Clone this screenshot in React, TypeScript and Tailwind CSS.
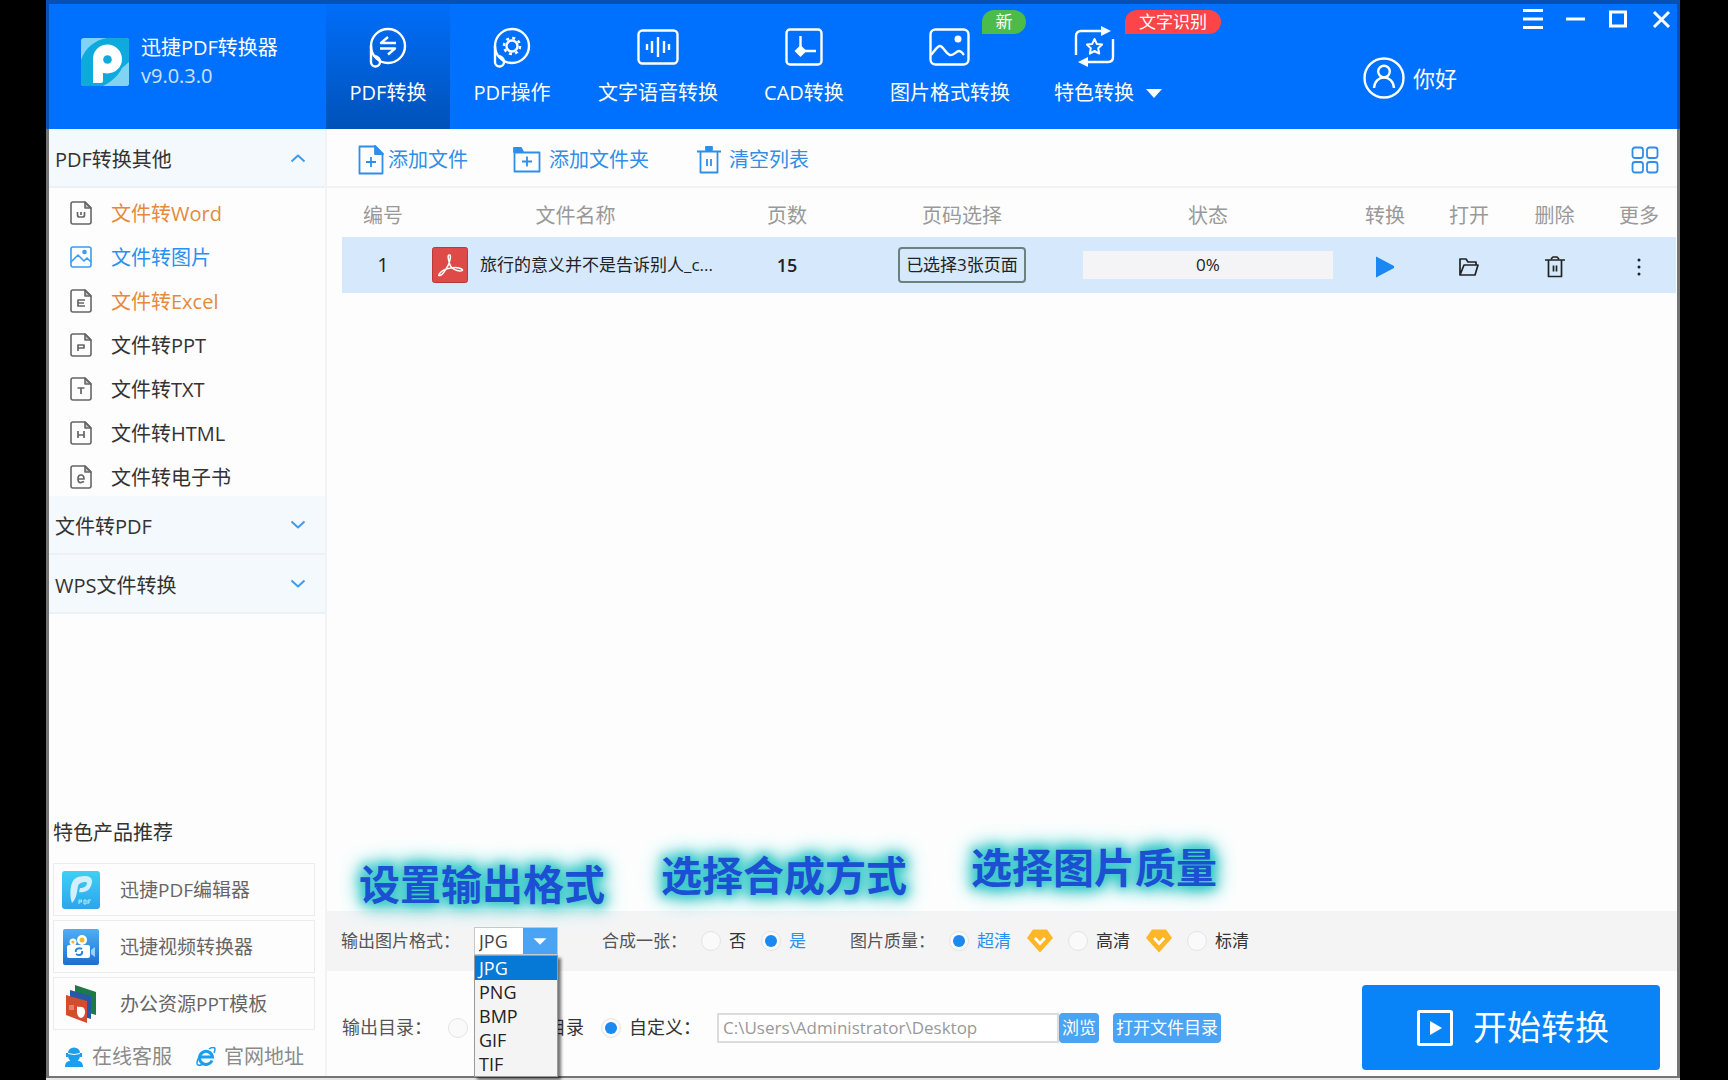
import React from "react";

type IconProps = { className?: string };

/* ---------- header icons ---------- */

const Loop = () => (
  <>
    <circle cx="22" cy="22" r="17" />
    <path d="M5 22V38a4.500 4.500 0 0 0 9 0c0-3-2-5-5-6" />
  </>
);

const line = {
  fill: "none",
  stroke: "currentColor",
  strokeWidth: 2.4,
  strokeLinejoin: "round" as const,
};

const ConvertIcon = () => (
  <svg viewBox="0 0 44 44" className="size-11" {...line}>
    <Loop />
    <path d="M30 19H15l7-6M14 24.500h15l-7 6" />
  </svg>
);

const GearIcon = () => (
  <svg viewBox="0 0 44 44" className="size-11" {...line}>
    <Loop />
    <circle cx="22" cy="22" r="5.500" />
    <circle cx="22" cy="22" r="8" strokeWidth="2.500" strokeDasharray="3 3.280" />
  </svg>
);

const VoiceIcon = () => (
  <svg viewBox="0 0 44 44" className="size-11" {...line}>
    <rect x="2.500" y="6.500" width="39" height="33" rx="4" />
    <path d="M11 20v6M16 17v12M22 13v20M28 17v12M33 20v6" />
  </svg>
);

const CadIcon = () => (
  <svg viewBox="0 0 44 44" className="size-11" {...line}>
    <rect x="4.500" y="5.500" width="35" height="35" rx="3.500" />
    <path d="M18.500 12v15H34" />
    <path d="m18.500 21 6 6-6 6-6-6z" fill="currentColor" stroke="none" />
  </svg>
);

const PictureIcon = () => (
  <svg viewBox="0 0 44 44" className="size-11" {...line}>
    <rect x="2.500" y="5.500" width="38" height="35" rx="5" />
    <path d="M3 31c3-3 6-9 9-9s6 8 10 9 6-4 9-4 3 2 5 4" />
    <circle cx="30" cy="15" r="3.500" fill="currentColor" stroke="none" />
  </svg>
);

const SpecialIcon = () => (
  <svg viewBox="0 0 44 44" className="size-11" {...line}>
    <path d="M4 31V12q0-5 5-5h22M41 15v18q0 5-5 5H14" />
    <path d="m29 2 10 5-10 5zM16 33 6 38l10 5z" fill="currentColor" stroke="none" />
    <path d="m22.500 15 2.300 4.900 5.300.7-3.900 3.700 1 5.300-4.700-2.600-4.700 2.600 1-5.300-3.900-3.700 5.300-.7z" strokeWidth="2" />
  </svg>
);

const Logo = () => (
  <svg viewBox="0 0 48 48" className="size-12 shrink-0">
    <clipPath id="logo-clip">
      <rect width="48" height="48" rx="3" />
    </clipPath>
    <g clipPath="url(#logo-clip)">
      <rect width="48" height="48" fill="#7fd3f3" />
      <path d="M0 48V22C4 10 14 2 26 0h22v30C44 40 38 46 30 48z" fill="#0ea9dd" />
      <path d="M41 30 48 24v24H22c8-4 15-10 19-18z" fill="#7fd3f3" />
      <path d="M12 45V22A14.500 14.500 0 1 1 26.500 35.500L22 35v8q0 2-2 2z" fill="#fff" />
      <circle cx="26.500" cy="21.500" r="4.300" fill="#0ea9dd" />
    </g>
  </svg>
);

/* ---------- toolbar and row icons ---------- */

const AddFileIcon = () => (
  <svg viewBox="0 0 26 30" className="h-[30px] w-[26px]" {...line} strokeWidth="1.800">
    <path d="M1.500 1.500h16l7 8v19h-23z" />
    <path d="M17 1v8h8z" fill="currentColor" />
    <path d="M8 17h10M13 12v10" />
  </svg>
);

const AddFolderIcon = () => (
  <svg viewBox="0 0 28 26" className="h-[26px] w-7" {...line} strokeWidth="1.800">
    <path d="M1.500 5.500h25v19h-25z" />
    <path d="M1 1h7l2 4H1z" fill="currentColor" />
    <path d="M9 14.500h10M14 9.500v10" />
  </svg>
);

const ClearIcon = () => (
  <svg viewBox="0 0 24 28" className="h-7 w-6" {...line} strokeWidth="1.800">
    <path d="M0 5.500h24M3.500 6v20.500h17V6M10 13v7M14 13v7" />
    <path d="M9 1h6v3H9z" fill="currentColor" />
  </svg>
);

const GridIcon = () => (
  <svg viewBox="0 0 28 28" className="size-7" {...line} strokeWidth="1.800">
    <rect x="1.500" y="1.500" width="10.500" height="10.500" rx="2.500" />
    <rect x="16" y="1.500" width="10.500" height="10.500" rx="2.500" />
    <rect x="1.500" y="16" width="10.500" height="10.500" rx="2.500" />
    <rect x="16" y="16" width="10.500" height="10.500" rx="2.500" />
  </svg>
);

const PdfIcon = () => (
  <svg viewBox="0 0 36 36" className="size-9 shrink-0">
    <rect x=".5" y=".5" width="35" height="35" rx="2" fill="#dd4a48" stroke="#b93a3a" />
    <path
      d="M17 8c-2 0 0 7 1 10s6 6 10 6 3-2-1-3-14 0-18 4-2 4 0 3 8-9 9-15 0-5-1-5z"
      fill="none"
      stroke="#fff"
      strokeWidth="1.500"
    />
  </svg>
);

const OpenIcon = () => (
  <svg viewBox="0 0 22 20" className="h-5 w-[22px]" {...line} strokeWidth="1.700">
    <path d="M2 18V2h6l2 3h8v3M2 18 6 8h14l-3 10z" />
  </svg>
);

const TrashIcon = () => (
  <svg viewBox="0 0 20 22" className="h-[22px] w-5" {...line} strokeWidth="1.700">
    <path d="M0 4h20M3.500 4v16.500h13V4M6 3l2-2h4l2 2M8.500 9.500v6M11.500 9.500v6" />
  </svg>
);

const Chevron = ({ up }: { up?: boolean }) => (
  <svg viewBox="0 0 16 10" className="mb-1 h-2.5 w-4" {...line} stroke="#3d9cf2" strokeWidth="2">
    <path d={up ? "m1.500 8.500 6.500-6 6.500 6" : "m1.500 1.500 6.500 6 6.500-6"} />
  </svg>
);

const Gem = () => (
  <svg viewBox="0 0 26 24" className="h-6 w-[26px]">
    <path d="M6 .5h14l6 8.500-13 14.500L0 9z" fill="#fdb627" />
    <path d="m8 9 5 5.500L18 9" fill="none" stroke="#fff" strokeWidth="2.800" />
  </svg>
);

const FileIcon = ({ glyph, className }: { glyph: string } & IconProps) => (
  <svg viewBox="0 0 22 24" className={className} {...line} strokeWidth="1.600">
    <path d="M3 1h12l6 6v14q0 2-2 2H3q-2 0-2-2V3q0-2 2-2z" />
    <path d="M15 1v6h6z" fill="currentColor" fillOpacity=".4" />
    <path d={glyph} strokeWidth="1.700" />
  </svg>
);

const SmallPicture = () => (
  <svg viewBox="0 0 22 22" className="mb-0.5 h-[22px] w-[22px] text-[#3b9bf3]" {...line} strokeWidth="1.600">
    <rect x="1" y="1" width="20" height="20" rx="2" />
    <path d="m1 16 7-7 6 6 3-3 4 4" />
    <circle cx="14.500" cy="6" r="1.500" fill="currentColor" />
  </svg>
);

/* ---------- product icons ---------- */

const EditorIcon = () => (
  <svg viewBox="0 0 38 38" className="size-[38px]">
    <defs>
      <linearGradient id="editor" x1="0" y1="0" x2="0" y2="1">
        <stop offset="0" stopColor="#3ed0f5" />
        <stop offset="1" stopColor="#2ba5ee" />
      </linearGradient>
    </defs>
    <rect width="38" height="38" rx="3" fill="url(#editor)" />
    <path d="M10 32C7 24 8 10 14 7c6-3 17-3 16 4-1 8-6 11-13 10l1-4c4 0 7-2 7-5 0-2-8-1-9 3-1 5-1 12-6 17z" fill="#d4effc" />
    <path d="M17 33v-4h2.500v2H17m5-2v4h2v-4zm4 4v-4h3m-3 2h2" fill="none" stroke="#bfe7fb" />
  </svg>
);

const VideoIcon = () => (
  <svg viewBox="0 0 36 36" className="mx-px size-9">
    <defs>
      <linearGradient id="video" x1="0" y1="0" x2="0" y2="1">
        <stop offset="0" stopColor="#4db0f2" />
        <stop offset="1" stopColor="#1d6fd0" />
      </linearGradient>
    </defs>
    <rect width="36" height="36" rx="2" fill="url(#video)" />
    <circle cx="19" cy="11" r="5" fill="#fff" />
    <circle cx="19" cy="11" r="2.500" fill="#f5b62e" />
    <circle cx="10" cy="13" r="3.500" fill="#fff" />
    <circle cx="10" cy="13" r="1.500" fill="#f5b62e" />
    <rect x="4" y="16" width="23" height="13" rx="2" fill="#fff" />
    <path d="m28 21 4-3v10l-4-3z" fill="#8fd8fa" />
    <path d="M19 20c-3-2-7 0-6 3m0 2c3 2 7 1 6-3" fill="none" stroke="#2b86dc" strokeWidth="2" />
  </svg>
);

const TemplateIcon = () => (
  <svg viewBox="0 0 38 38" className="size-[38px]">
    <path d="m13 0 21 7v23l-21-6z" fill="#1c7a46" />
    <path d="m8 5 21 6v23L8 28z" fill="#2558a8" />
    <path d="m4 10 21 6v22L4 30z" fill="#d64a2e" />
    <path d="M15 21c1 2 2 0 4 1 3 0 4 2 4 5s-2 6-4 6-4-3-4-6z" fill="#fff" />
    <path d="M7 20h5v5H7z" fill="#e8806c" />
  </svg>
);

const ServiceIcon = () => (
  <svg viewBox="0 0 20 20" className="size-5" fill="#1b9df0">
    <path d="M4 6a6 5.500 0 0 1 12 0v3a6 6 0 0 1-12 0z" />
    <path d="M1 20c0-4 2-6 5-6h8c3 0 5 2 5 6z" />
    <path d="M2 6h2v4H2zm14 0h2v4h-2z" />
    <path d="M4 6.500q6 2 12 0" stroke="#fff" fill="none" />
  </svg>
);

const BrowserIcon = () => (
  <svg viewBox="0 0 20 20" className="size-5" fill="none" stroke="#1b9df0">
    <path d="M16 13.500A6.500 6.500 0 1 1 16.500 10H5" strokeWidth="3" />
    <path d="M13 2c3-2 6-2 6 0s0 2-1 4M4 9c-3 4-4 8-2 9s3 0 5-1" strokeWidth="1.500" />
  </svg>
);

/* ---------- data ---------- */

const tabs = [
  { label: "PDF转换", icon: <ConvertIcon />, width: "w-31", active: true },
  { label: "PDF操作", icon: <GearIcon />, width: "w-31" },
  { label: "文字语音转换", icon: <VoiceIcon />, width: "w-42" },
  { label: "CAD转换", icon: <CadIcon />, width: "w-31" },
  { label: "图片格式转换", icon: <PictureIcon />, width: "w-42", badge: "新", badgeClass: "right-2 w-11 bg-[#4dbb4a]" },
  { label: "特色转换", icon: <SpecialIcon />, width: "w-30", caret: true, badge: "文字识别", badgeClass: "left-[91px] w-24 bg-[#fb4548]" },
];

const fileItems = [
  { label: "文件转Word", color: "text-[#e58a3c]", glyph: "M7.500 11v3q0 2 2 2h3q2 0 2-2v-3M11 11v3" },
  { label: "文件转图片", color: "text-[#2b8ff0]" },
  { label: "文件转Excel", color: "text-[#e58a3c]", glyph: "M15 11H8v6h7M8 14h6" },
  { label: "文件转PPT", color: "text-[#333]", glyph: "M8 18v-6h6v3H8" },
  { label: "文件转TXT", color: "text-[#333]", glyph: "M7.500 11h7M11 11v6" },
  { label: "文件转HTML", color: "text-[#333]", glyph: "M8 10v7M14 10v7M8 14h6" },
  { label: "文件转电子书", color: "text-[#333]", glyph: "M8 14h6q0-4-3-4t-3 4 3 3.500l3-1" },
];

const products = [
  { label: "迅捷PDF编辑器", icon: <EditorIcon /> },
  { label: "迅捷视频转换器", icon: <VideoIcon /> },
  { label: "办公资源PPT模板", icon: <TemplateIcon /> },
];

const formats = ["JPG", "PNG", "BMP", "GIF", "TIF"];

/* ---------- parts ---------- */

function Section({ label, up }: { label: string; up?: boolean }) {
  return (
    <button
      aria-expanded={!!up}
      className="flex h-[59px] w-full items-center justify-between border-b-2 border-[#edf1f4] bg-[#f4f9fd] pt-1 pr-[19px] pl-1.5 text-[20px] text-[#333]"
    >
      {label}
      <Chevron up={up} />
    </button>
  );
}

type RadioProps = { name: string; label: React.ReactNode; checked?: boolean; className?: string };

function Radio({ name, label, checked, className = "" }: RadioProps) {
  return (
    <label className={`flex shrink-0 items-center gap-2 whitespace-nowrap text-[#333] ${className}`}>
      <input
        type="radio"
        name={name}
        defaultChecked={checked}
        className="flex size-5 shrink-0 appearance-none items-center justify-center rounded-full border border-[#e4e4e4] bg-[#fafafa] checked:before:size-3 checked:before:rounded-full checked:before:bg-[#1b8af0] checked:before:content-['']"
      />
      {label}
    </label>
  );
}

function Caption({ text, className }: { text: string; className: string }) {
  return (
    <p
      className={`text-[41px] leading-10 font-bold whitespace-nowrap text-[#1c4fd2] [text-shadow:0_0_8px_#3ccaca,0_0_12px_#3ccaca,0_0_16px_#3ccaca,0_0_20px_#3ccaca,0_0_24px_#3ccaca] ${className}`}
    >
      {text}
    </p>
  );
}

function Header() {
  return (
    <header className="flex h-[129px] shrink-0 border-x-3 border-t-4 border-[#0750b4] bg-[#0070ff] text-white">
      <div className="flex w-[277px] shrink-0 gap-3 pt-[34px] pl-8">
        <Logo />
        <div className="-mt-1 text-[20px] leading-7">
          <h1>迅捷PDF转换器</h1>
          <p className="text-white/80">v9.0.3.0</p>
        </div>
      </div>
      <nav className="flex">
        {tabs.map((t) => (
          <button
            key={t.label}
            className={`relative flex h-full shrink-0 flex-col items-center gap-[13px] pt-5 ${t.width} ${
              t.active ? "bg-linear-to-b from-[#006efa] to-[#0052b8]" : ""
            }`}
          >
            {t.icon}
            <span className="relative text-[20px] leading-6 whitespace-nowrap">
              {t.label}
              {t.caret && (
                <svg viewBox="0 0 16 10" className="absolute top-2 left-full ml-3 h-2.5 w-4" fill="currentColor">
                  <path d="M0 0h16L8 9z" />
                </svg>
              )}
            </span>
            {t.badge && (
              <span className={`absolute top-1.5 h-6 rounded-t-xl rounded-br-xl text-center text-[17px] leading-6 ${t.badgeClass}`}>
                {t.badge}
              </span>
            )}
          </button>
        ))}
      </nav>
      <a href="#user" className="mr-auto ml-[209px] flex items-center gap-2 self-start pt-[53px] text-[22px] leading-10 whitespace-nowrap">
        <svg viewBox="0 0 42 42" className="size-[42px]" {...line}>
          <circle cx="21" cy="21" r="19.500" />
          <circle cx="21" cy="14.500" r="5.800" />
          <path d="M11 31c1-14 19-14 20 0" />
        </svg>
        你好
      </a>
      <div className="flex gap-[21px] pt-1 pr-1">
        <button aria-label="菜单" className="size-[22px]">
          <svg viewBox="0 0 22 22" {...line} strokeWidth="3">
            <path d="M1 2.500h20M1 11h20M1 19.500h20" />
          </svg>
        </button>
        <button aria-label="最小化" className="size-[22px]">
          <svg viewBox="0 0 22 22" {...line} strokeWidth="3">
            <path d="M1 11h19" />
          </svg>
        </button>
        <button aria-label="最大化" className="size-[22px]">
          <svg viewBox="0 0 22 22" {...line} strokeWidth="3" strokeLinejoin="miter">
            <path d="M2.500 4h15v14h-15z" />
          </svg>
        </button>
        <button aria-label="关闭" className="size-[22px]">
          <svg viewBox="0 0 22 22" {...line} strokeWidth="3">
            <path d="m3 4 15 15M18 4 3 19" />
          </svg>
        </button>
      </div>
    </header>
  );
}

function Sidebar() {
  return (
    <aside className="flex w-[278px] shrink-0 flex-col border-r-2 border-[#f1f3f5]">
      <Section label="PDF转换其他" up />
      <ul className="-mb-1 pt-1">
        {fileItems.map((f) => (
          <li key={f.label}>
            <a href="#convert" className={`flex h-11 items-center gap-[19px] pl-[21px] text-[20px] ${f.color}`}>
              {f.glyph ? <FileIcon glyph={f.glyph} className="mb-0.5 h-6 w-[22px] text-[#666]" /> : <SmallPicture />}
              {f.label}
            </a>
          </li>
        ))}
      </ul>
      <Section label="文件转PDF" />
      <Section label="WPS文件转换" />
      <div className="mt-auto">
        <h2 className="pl-1 text-[20px] leading-7 text-[#333]">特色产品推荐</h2>
        <ul className="mt-4 flex flex-col gap-1">
          {products.map((p) => (
            <li key={p.label}>
              <a
                href="#product"
                className="mr-2.5 ml-1 flex h-[53px] items-center gap-5 border border-[#ececec] pl-2 text-[19px] text-[#666]"
              >
                {p.icon}
                <span className="pt-0.5">{p.label}</span>
              </a>
            </li>
          ))}
        </ul>
        <div className="flex h-[46px] items-center gap-6 pt-2 pl-[15px] text-[20px] text-[#8a8a8a]">
          <a href="#service" className="flex items-center gap-2">
            <ServiceIcon />
            在线客服
          </a>
          <a href="#site" className="flex items-center gap-2">
            <BrowserIcon />
            官网地址
          </a>
        </div>
      </div>
    </aside>
  );
}

function Toolbar() {
  return (
    <div className="flex h-[59px] items-center border-b-2 border-[#f2f2f4] pt-1 pr-[18px] pl-[31px] text-[20px] text-[#2f8fe8]">
      <button className="flex items-center gap-1">
        <AddFileIcon />
        添加文件
      </button>
      <button className="ml-[45px] flex items-center gap-2">
        <AddFolderIcon />
        添加文件夹
      </button>
      <button className="ml-12 flex items-center gap-2">
        <ClearIcon />
        清空列表
      </button>
      <button aria-label="切换视图" className="ml-auto">
        <GridIcon />
      </button>
    </div>
  );
}

function FileTable() {
  return (
    <div className="pr-px pl-[15px]">
      <table className="w-full table-fixed text-center">
        <colgroup>
          <col className="w-[82px]" />
          <col />
          <col className="w-[120px]" />
          <col className="w-[230px]" />
          <col className="w-[262px]" />
          <col className="w-[92px]" />
          <col className="w-[76px]" />
          <col className="w-[95px]" />
          <col className="w-[74px]" />
        </colgroup>
        <thead>
          <tr className="h-[49px] text-[20px] text-[#999]">
            {["编号", "文件名称", "页数", "页码选择", "状态", "转换", "打开", "删除", "更多"].map((h) => (
              <th key={h} className="pt-1.5 font-normal">
                {h}
              </th>
            ))}
          </tr>
        </thead>
        <tbody>
          <tr className="h-14 bg-[#d6e9fc] text-[17px] text-[#222]">
            <td className="text-[20px]">1</td>
            <td>
              <div className="flex items-center gap-3 pl-2 whitespace-nowrap">
                <PdfIcon />
                旅行的意义并不是告诉别人_c...
              </div>
            </td>
            <td className="text-[18px] font-semibold">15</td>
            <td>
              <button className="h-9 w-32 rounded-sm border-2 border-[#6d8080] whitespace-nowrap">已选择3张页面</button>
            </td>
            <td className="px-1.5">
              <div role="progressbar" aria-valuenow={0} className="h-7 bg-[#f4f4f6] leading-7">
                0%
              </div>
            </td>
            <td>
              <button aria-label="转换" className="align-middle">
                <svg viewBox="0 0 18 22" className="h-[22px] w-[18px]" fill="#1b87f3">
                  <path d="M0 1q0-1 1 0l17 9v2L1 21q-1 1-1 0z" />
                </svg>
              </button>
            </td>
            <td>
              <button aria-label="打开" className="align-middle">
                <OpenIcon />
              </button>
            </td>
            <td>
              <button aria-label="删除" className="align-middle">
                <TrashIcon />
              </button>
            </td>
            <td>
              <button aria-label="更多" className="align-middle">
                <svg viewBox="0 0 4 18" className="h-[18px] w-1" fill="currentColor">
                  <circle cx="2" cy="2" r="1.500" />
                  <circle cx="2" cy="9" r="1.500" />
                  <circle cx="2" cy="16" r="1.500" />
                </svg>
              </button>
            </td>
          </tr>
        </tbody>
      </table>
    </div>
  );
}

function FormatSelect() {
  return (
    <div className="relative text-[18px] text-[#222]">
      <div className="relative flex h-7 w-[84px] border border-[#c8c8c8] bg-white">
        <select id="format" defaultValue="JPG" className="h-full w-full appearance-none pl-1 leading-6 text-[#444]">
          {formats.map((f) => (
            <option key={f}>{f}</option>
          ))}
        </select>
        <svg viewBox="0 0 34 28" className="pointer-events-none absolute inset-y-0 right-0 h-full w-[34px] bg-[#4aa3f3]">
          <path d="M10 11h14l-7 7z" fill="#fff" />
        </svg>
      </div>
      <ul role="listbox" className="absolute top-full left-0 z-20 w-[84px] border border-[#9a9a9a] bg-[#f4f4f4] shadow-[3px_3px_3px_rgba(0,0,0,0.55)]">
        {formats.map((f, i) => (
          <li
            key={f}
            role="option"
            aria-selected={i === 0}
            className={`h-6 pl-1 leading-6 ${i === 0 ? "bg-[#0678d6] text-white" : ""}`}
          >
            {f}
          </li>
        ))}
      </ul>
    </div>
  );
}

function OptionsBar() {
  return (
    <div className="flex h-15 items-center bg-[#f4f4f5] pl-3.5 text-[17px] text-[#555]">
      <label htmlFor="format" className="w-[133px] whitespace-nowrap">
        输出图片格式：
      </label>
      <FormatSelect />
      <span className="ml-11 w-[99px] whitespace-nowrap">合成一张：</span>
      <Radio name="merge" label="否" />
      <Radio name="merge" label="是" checked className="ml-[15px] text-[#2b8ff0]!" />
      <span className="ml-11 w-[99px] whitespace-nowrap">图片质量：</span>
      <Radio name="quality" label="超清" checked className="mr-4 text-[#2b8ff0]!" />
      <Gem />
      <Radio name="quality" label="高清" className="mr-4 ml-[15px]" />
      <Gem />
      <Radio name="quality" label="标清" className="ml-[15px]" />
    </div>
  );
}

function OutputBar() {
  return (
    <div className="flex h-[105px] items-center pt-2 pr-[17px] pl-[15px] text-[18px] text-[#555]">
      <span className="w-[106px] whitespace-nowrap">输出目录：</span>
      <Radio name="dir" label={<span className="pl-18">目录</span>} />
      <Radio name="dir" label="自定义：" checked className="ml-[17px] w-[116px]" />
      <input
        aria-label="输出目录"
        defaultValue="C:\Users\Administrator\Desktop"
        className="h-[30px] w-[342px] border-2 border-[#dcdcdc] bg-white pl-1 text-[17px] text-[#999]"
      />
      <button className="h-[30px] w-10 rounded-sm bg-[#4aa3f3] text-[17px] whitespace-nowrap text-white">浏览</button>
      <button className="ml-3.5 h-[30px] w-[108px] rounded-sm bg-[#4aa3f3] text-[17px] whitespace-nowrap text-white">
        打开文件目录
      </button>
      <button className="ml-auto flex h-[85px] w-[298px] items-center justify-center gap-5 rounded-sm bg-[#0884f8] pl-1 text-[34px] whitespace-nowrap text-white">
        <svg viewBox="0 0 36 36" className="size-9" {...line} strokeWidth="3">
          <rect x="1.500" y="1.500" width="33" height="33" rx="1" />
          <path d="m13 11 12 7-12 7z" fill="currentColor" stroke="none" />
        </svg>
        开始转换
      </button>
    </div>
  );
}

export default function App() {
  return (
    <div className="flex min-h-screen bg-black pr-12 pl-[46px] font-['Open_Sans','Noto_Sans_CJK_SC',sans-serif]">
      <div className="flex flex-1 flex-col bg-neutral-200 pb-0.5">
        <Header />
        <div className="flex flex-1 border-x-3 border-b-2 border-[#747474] bg-[#fdfdfd]">
          <Sidebar />
          <main className="flex min-w-0 flex-1 flex-col">
            <Toolbar />
            <FileTable />
            <div className="relative z-10 mt-auto flex items-end pl-8">
              <Caption text="设置输出格式" className="mb-[7px]" />
              <Caption text="选择合成方式" className="mb-4 ml-14" />
              <Caption text="选择图片质量" className="mb-6 ml-16" />
            </div>
            <OptionsBar />
            <OutputBar />
          </main>
        </div>
      </div>
    </div>
  );
}
